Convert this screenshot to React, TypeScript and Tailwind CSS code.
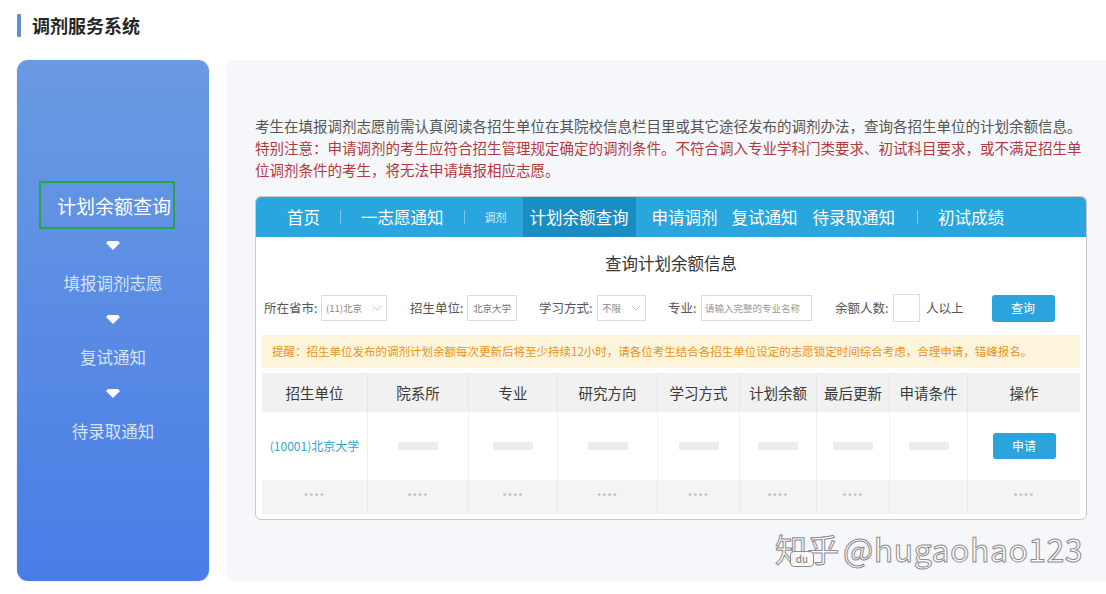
import React from "react";

const cols = [
  { name: "招生单位", w: 105 },
  { name: "院系所", w: 101 },
  { name: "专业", w: 89 },
  { name: "研究方向", w: 100 },
  { name: "学习方式", w: 82 },
  { name: "计划余额", w: 77 },
  { name: "最后更新", w: 73 },
  { name: "申请条件", w: 78 },
  { name: "操作", w: 113 },
];

function Tri() {
  return (
    <svg width="14" height="10" viewBox="0 0 14 10">
      <polygon points="0,2 2,0 12,0 14,2 7,9" fill="#ffffff" />
    </svg>
  );
}

function Chevron() {
  return (
    <svg width="10" height="6" viewBox="0 0 10 6" className="shrink-0">
      <polyline points="1,1 5,5 9,1" fill="none" stroke="#c8c8c8" strokeWidth="1" />
    </svg>
  );
}

function Sep() {
  return <span className="inline-block w-px h-[14px] bg-white/40" />;
}

export default function App() {
  return (
    <div className="relative w-[1106px] h-[594px] bg-white overflow-hidden font-['Noto_Sans_CJK_SC','Microsoft_YaHei',sans-serif]">
      {/* Title */}
      <div className="flex items-center h-[50px] pl-[17px]">
        <span className="w-[4px] h-[23px] bg-[#5f8fd8] rounded-[1px]" />
        <span className="ml-[11px] text-[18px] font-bold text-[#252525] leading-none">调剂服务系统</span>
      </div>

      <div className="flex pl-[17px] mt-[10px]">
        {/* Sidebar */}
        <div className="w-[192px] h-[521px] shrink-0 rounded-[11px] bg-gradient-to-b from-[#6a9ae2] to-[#4a7ce6] flex flex-col items-center pt-[121px] shadow-[0_0_2px_rgba(0,0,0,0.15)]">
          <div className="self-start ml-[22px] w-[136px] h-[48px] border-2 border-[#24a64a] flex items-center pl-[16px]">
            <span className="text-[19px] text-white leading-none whitespace-nowrap">计划余额查询</span>
          </div>
          <div className="h-[34px] flex items-center"><Tri /></div>
          <div className="h-[40px] flex items-center text-[16.5px] text-[#d6e2f7]">填报调剂志愿</div>
          <div className="h-[34px] flex items-center"><Tri /></div>
          <div className="h-[40px] flex items-center text-[16.5px] text-[#d6e2f7]">复试通知</div>
          <div className="h-[34px] flex items-center"><Tri /></div>
          <div className="h-[40px] flex items-center text-[16.5px] text-[#d6e2f7]">待录取通知</div>
        </div>

        {/* Main panel */}
        <div className="ml-[17px] flex-1 h-[521px] bg-[#f5f7fa] rounded-tl-[8px] rounded-bl-[8px] pl-[29px] pr-[19px] pt-[55px]">
          <div className="text-[14.5px] leading-[22px]">
            <span className="text-[#555555]">考生在填报调剂志愿前需认真阅读各招生单位在其院校信息栏目里或其它途径发布的调剂办法，查询各招生单位的计划余额信息。</span>
            <br />
            <span className="text-[#b23a3e]">特别注意：申请调剂的考生应符合招生管理规定确定的调剂条件。不符合调入专业学科门类要求、初试科目要求，或不满足招生单位调剂条件的考生，将无法申请填报相应志愿。</span>
          </div>

          {/* Card */}
          <div className="mt-[15px] w-[832px] h-[324px] bg-white border border-[#c9c9c9] rounded-[6px] overflow-hidden">
            {/* Nav */}
            <div className="h-[40px] bg-[#29a6de] flex items-center text-white text-[16.5px] leading-none whitespace-nowrap">
              <span className="ml-[31px]">首页</span>
              <span className="ml-[20px] flex"><Sep /></span>
              <span className="ml-[20px]">一志愿通知</span>
              <span className="ml-[20px] flex"><Sep /></span>
              <span className="ml-[20px] text-[11px] text-white/80">调剂</span>
              <span className="ml-[16px] h-[40px] px-[7px] bg-[#1a8dc3] flex items-center">计划余额查询</span>
              <span className="ml-[16px]">申请调剂</span>
              <span className="ml-[14px]">复试通知</span>
              <span className="ml-[15px]">待录取通知</span>
              <span className="ml-[22px] flex"><Sep /></span>
              <span className="ml-[20px]">初试成绩</span>
            </div>

            <div className="h-[52px] flex items-center justify-center text-[16.5px] text-[#333333]">查询计划余额信息</div>

            {/* Search row */}
            <div className="h-[38px] flex items-center pl-[8px] text-[12.5px] text-[#555555] whitespace-nowrap">
              <span className="w-[53px] shrink-0">所在省市:</span>
              <div className="ml-[4px] w-[66px] h-[26px] shrink-0 border border-[#dcdcdc] flex items-center justify-between px-[4px]">
                <span className="text-[9.5px] text-[#888]">(11)北京</span>
                <Chevron />
              </div>
              <span className="ml-[23px] w-[53px] shrink-0">招生单位:</span>
              <div className="ml-[4px] w-[50px] h-[26px] shrink-0 border border-[#dcdcdc] flex items-center justify-center">
                <span className="text-[9.5px] text-[#777]">北京大学</span>
              </div>
              <span className="ml-[22px] w-[54px] shrink-0">学习方式:</span>
              <div className="ml-[4px] w-[49px] h-[26px] shrink-0 border border-[#dcdcdc] flex items-center justify-between px-[4px]">
                <span className="text-[9.5px] text-[#888]">不限</span>
                <Chevron />
              </div>
              <span className="ml-[22px] w-[30px] shrink-0">专业:</span>
              <div className="ml-[3px] w-[111px] h-[26px] shrink-0 border border-[#dcdcdc] flex items-center px-[3px] overflow-hidden">
                <span className="text-[9.5px] text-[#999]">请输入完整的专业名称</span>
              </div>
              <span className="ml-[23px] w-[54px] shrink-0">余额人数:</span>
              <div className="ml-[4px] w-[27px] h-[28px] shrink-0 border border-[#dcdcdc]" />
              <span className="ml-[6px] shrink-0">人以上</span>
              <div className="ml-[28px] w-[63px] h-[27px] shrink-0 bg-[#2ba4dd] rounded-[3px] flex items-center justify-center text-white text-[12px]">查询</div>
            </div>

            {/* Table area */}
            <div className="px-[6px] mt-[8px]">
              <div className="h-[33px] bg-[#fcf5dc] flex items-center pl-[10px] text-[11.5px] text-[#e8941c] whitespace-nowrap">
                提醒：招生单位发布的调剂计划余额每次更新后将至少持续12小时，请各位考生结合各招生单位设定的志愿锁定时间综合考虑，合理申请，错峰报名。
              </div>
              <div className="mt-[5px]">
                <div className="flex h-[39px] bg-[#f1f1f1]">
                  {cols.map((c, i) => (
                    <div
                      key={c.name}
                      style={{ width: c.w }}
                      className={`flex items-center justify-center text-[14.5px] text-[#3a3a3a] ${i > 0 ? "border-l border-[#e6e6e6]" : ""}`}
                    >
                      {c.name}
                    </div>
                  ))}
                </div>
                <div className="flex h-[68px] bg-white">
                  {cols.map((c, i) => (
                    <div
                      key={c.name}
                      style={{ width: c.w }}
                      className={`flex items-center justify-center ${i > 0 ? "border-l border-[#f0f0f0]" : ""}`}
                    >
                      {i === 0 ? (
                        <span className="text-[12px] text-[#3aa3c9] whitespace-nowrap">(10001)北京大学</span>
                      ) : i === 8 ? (
                        <div className="w-[63px] h-[26px] bg-[#2ba4dd] rounded-[3px] flex items-center justify-center text-white text-[12px]">申请</div>
                      ) : (
                        <span className="w-[40px] h-[8px] bg-[#ececec] rounded-[1px]" />
                      )}
                    </div>
                  ))}
                </div>
                <div className="flex h-[34px] bg-[#f4f4f4]">
                  {cols.map((c, i) => (
                    <div
                      key={c.name}
                      style={{ width: c.w }}
                      className={`flex items-center justify-center text-[9px] text-[#b0b0b0] tracking-[1px] ${i > 0 ? "border-l border-[#e9e9e9]" : ""}`}
                    >
                      {i === 7 ? "" : "****"}
                    </div>
                  ))}
                </div>
              </div>
            </div>
          </div>
        </div>
      </div>

      {/* Watermark */}
      <div className="absolute left-[775px] top-[532px] flex items-center text-[32px] leading-none text-white/90 [-webkit-text-stroke:1px_#8c8c8c] whitespace-nowrap">
        <span>知乎</span>
        <span className="ml-[4px] tracking-[0.5px]">@hugaohao123</span>
      </div>
      <div className="absolute left-[790px] top-[551px] w-[24px] h-[16px] rounded-[4px] border border-[#8c8c8c] bg-white/80 flex items-center justify-center text-[10px] text-[#777] leading-none">du</div>
    </div>
  );
}
